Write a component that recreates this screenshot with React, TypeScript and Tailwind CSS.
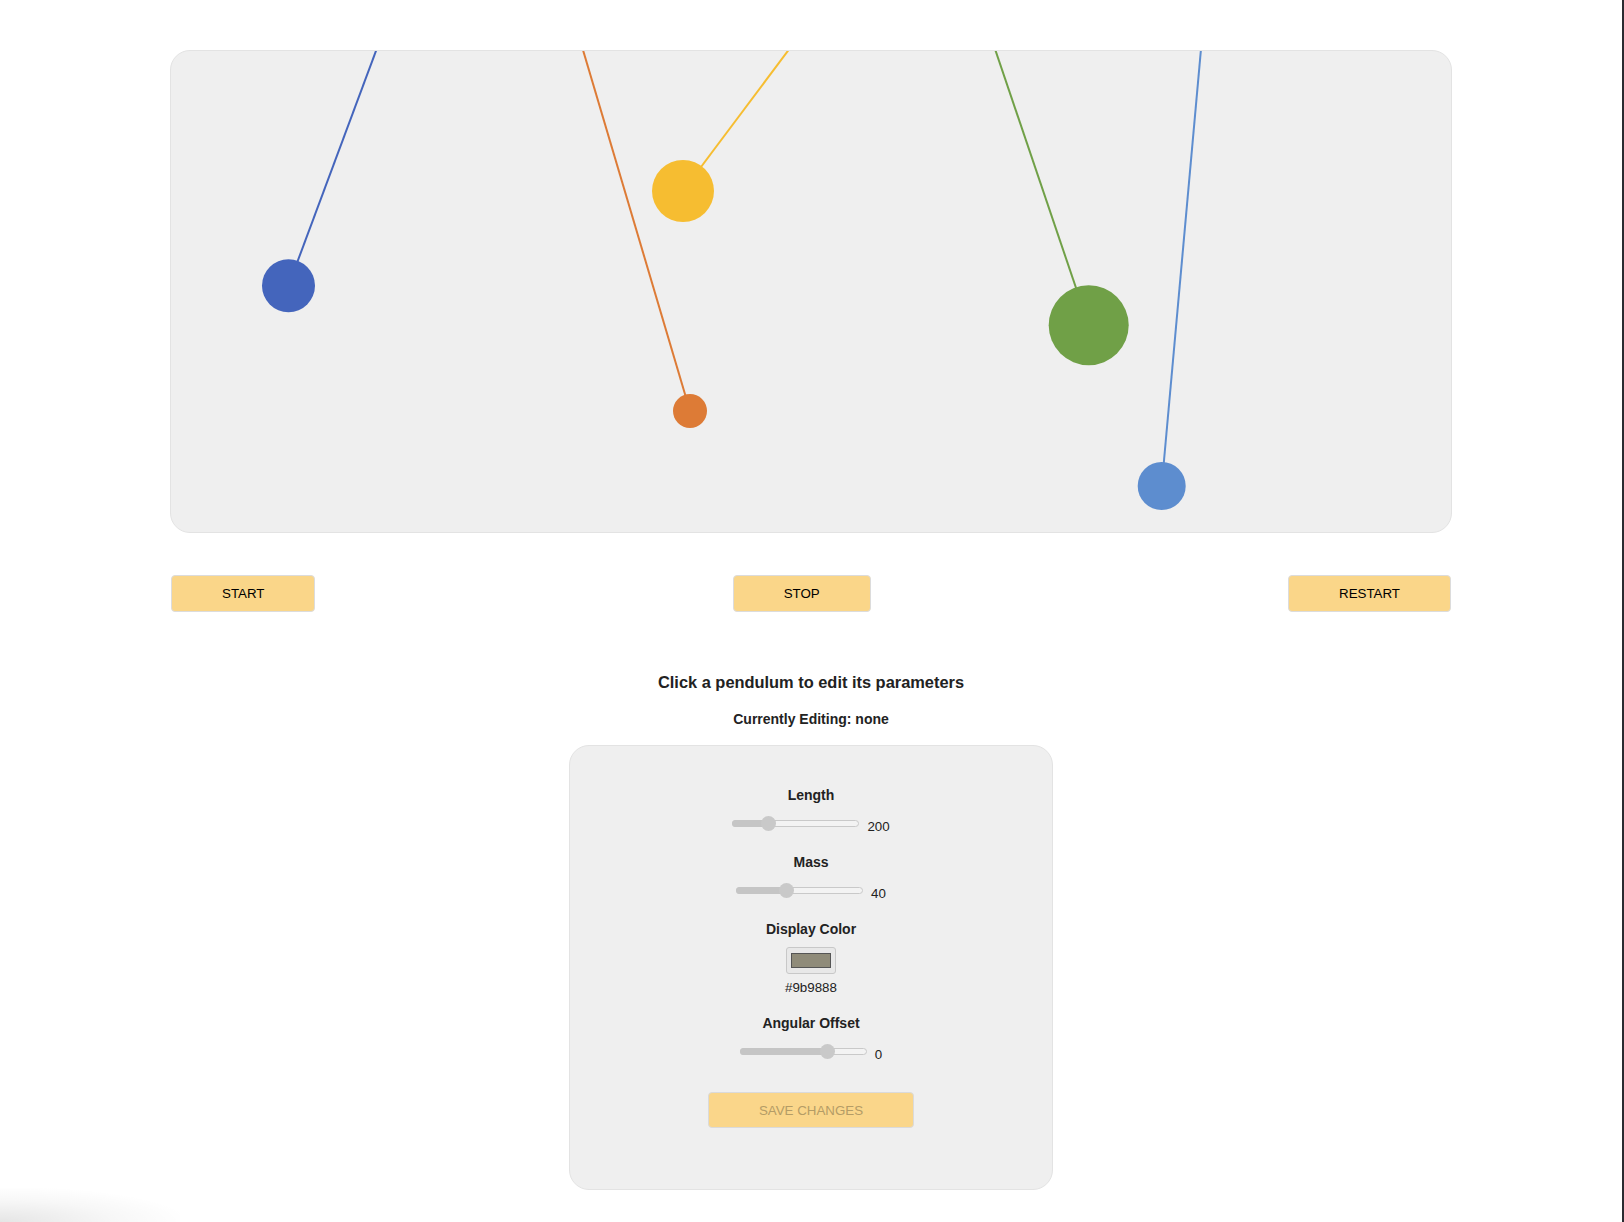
import React from "react";

type Pend = { x1: number; x2: number; y2: number; r: number; color: string };

const pendulums: Pend[] = [
  { x1: 205.7, x2: 117.5, y2: 234.7, r: 26.5, color: "#4465bc" },
  { x1: 411.7, x2: 519, y2: 360, r: 17, color: "#dd7b36" },
  { x1: 618.3, x2: 512, y2: 140, r: 31, color: "#f6bd31" },
  { x1: 824, x2: 917.7, y2: 274.3, r: 40, color: "#70a047" },
  { x1: 1030, x2: 990.7, y2: 435, r: 24, color: "#5d8dcf" },
];

function Slider({ t, value }: { t: number; value: string }) {
  const w = 127;
  const thumb = 15;
  const cx = thumb / 2 + t * (w - thumb);
  return (
    <div className="flex items-center justify-center gap-[8px] h-[16px]">
      <div className="relative w-[127px] h-[7px] rounded-full border border-[#c9c9c9] bg-[#f3f3f3]">
        <div
          className="absolute left-[-1px] top-[-1px] h-[7px] rounded-full bg-[#c5c5c5]"
          style={{ width: cx + 1 }}
        />
        <div
          className="absolute top-[-5px] w-[15px] h-[15px] rounded-full bg-[#c9c9c9]"
          style={{ left: cx - thumb / 2 - 1 }}
        />
      </div>
      <span className="text-[13.333px] leading-[15px] text-[#222] mt-[6px]">{value}</span>
    </div>
  );
}

function Btn({ children }: { children: React.ReactNode }) {
  return (
    <button className="h-[37px] px-[50px] border border-[#dcdcdc] rounded-[4px] bg-[#fad689] text-[13.333px] text-black leading-[15px]">
      {children}
    </button>
  );
}

export default function App() {
  return (
    <div
      className="min-h-screen flex bg-white text-[#222]"
      style={{ fontFamily: '"Liberation Sans", Arial, Helvetica, sans-serif' }}
    >
      <div className="flex-1 flex flex-col items-center pt-[50px] relative">
        <div className="w-[1282px] h-[483px] border border-[#e3e3e3] rounded-[20px] bg-[#efefef] overflow-hidden">
          <svg width="1280" height="481" viewBox="0 0 1280 481" className="block">
            {pendulums.map((p, i) => (
              <g key={i}>
                <line x1={p.x1} y1={-2} x2={p.x2} y2={p.y2} stroke={p.color} strokeWidth={2} />
                <circle cx={p.x2} cy={p.y2} r={p.r} fill={p.color} />
              </g>
            ))}
          </svg>
        </div>

        <div className="w-[1280px] mt-[42px] flex justify-between">
          <Btn>START</Btn>
          <Btn>STOP</Btn>
          <Btn>RESTART</Btn>
        </div>

        <h3 className="mt-[61px] text-[16.4px] leading-[18px] font-bold">
          Click a pendulum to edit its parameters
        </h3>
        <div className="mt-[20px] text-[14px] leading-[16px] font-bold">Currently Editing: none</div>

        <div className="mt-[18px] w-[484px] h-[445px] border border-[#e3e3e3] rounded-[20px] bg-[#efefef] flex flex-col items-center pt-[41px]">
          <div className="text-[14px] leading-[16px] font-bold">Length</div>
          <div className="mt-[12px]">
            <Slider t={0.254} value="200" />
          </div>
          <div className="mt-[23px] text-[14px] leading-[16px] font-bold">Mass</div>
          <div className="mt-[12px]">
            <Slider t={0.38} value="40" />
          </div>
          <div className="mt-[23px] text-[14px] leading-[16px] font-bold">Display Color</div>
          <div className="mt-[10px] w-[50px] h-[27px] rounded-[3px] border border-[#c8c8c8] bg-[#e8e8e8] flex items-center justify-center">
            <div className="w-[40px] h-[15px] border border-[#555] bg-[#8f8b79]" />
          </div>
          <div className="mt-[6px] text-[13.333px] leading-[15px]">#9b9888</div>
          <div className="mt-[20px] text-[14px] leading-[16px] font-bold">Angular Offset</div>
          <div className="mt-[12px]">
            <Slider t={0.72} value="0" />
          </div>
          <button className="mt-[33px] h-[36px] px-[50px] border border-[#dadada] rounded-[4px] bg-[#fad68a] text-[13.333px] leading-[15px] text-[#b49c66]">
            SAVE CHANGES
          </button>
        </div>

        <div className="absolute left-0 bottom-0 w-[180px] h-[34px] bg-[radial-gradient(ellipse_at_bottom_left,rgba(0,0,0,0.1),rgba(0,0,0,0.03)_45%,transparent_75%)] pointer-events-none" />
      </div>
      <div className="w-[2px] bg-[#2b2b31]" />
    </div>
  );
}
